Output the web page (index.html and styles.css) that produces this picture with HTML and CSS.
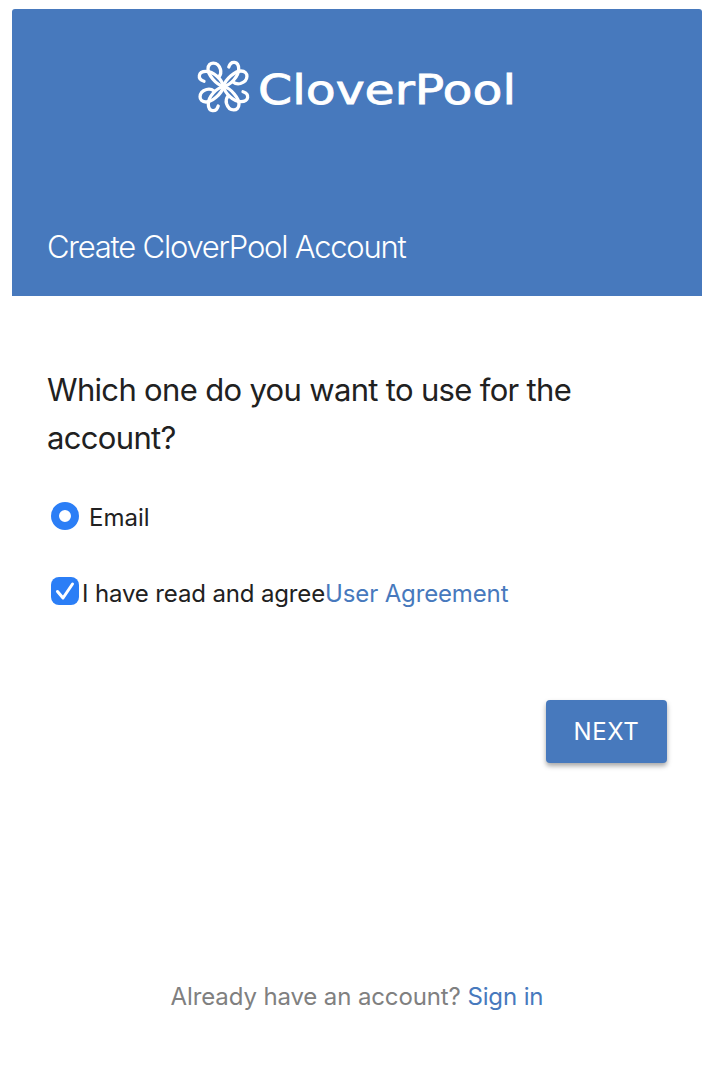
FILE: index.html
```html
<!DOCTYPE html>
<html lang="en">
<head>
  <meta charset="UTF-8" />
  <meta name="viewport" content="width=device-width, initial-scale=1.0" />
  <title>Create CloverPool Account</title>
  <link rel="stylesheet" href="styles.css">
</head>
<body>
  <div class="card">
    <header class="header">
      <svg class="logo" width="320" height="60" viewBox="0 0 320 60" role="img" aria-label="CloverPool">
        <defs>
          <g id="petal">
            <path d="M0 0C-8 -2 -15.500 -12 -15.500 -17.500C-15.500 -25.500 -5.500 -25.500 -3 -17C-2.200 -14 -2.500 -12 -4.500 -9.500" />
            <path d="M0 0C-1.500 -7 -10 -15.200 -17.500 -15.200C-25.500 -15.200 -26.500 -7.500 -19.500 -5.300" />
          </g>
        </defs>
        <g class="logo-mark" transform="translate(26.500 31.500)">
          <use href="#petal" />
          <use href="#petal" transform="rotate(90)" />
          <use href="#petal" transform="rotate(180)" />
          <use href="#petal" transform="rotate(270)" />
        </g>
        <text class="logo-text" x="61" y="49" textLength="258" lengthAdjust="spacingAndGlyphs">CloverPool</text>
      </svg>
      <h1 class="title">Create CloverPool Account</h1>
    </header>

    <form class="form">
      <p class="question">Which one do you want to use for the account?</p>

      <label class="option">
        <input class="radio" type="radio" name="type" checked />
        <span class="email">Email</span>
      </label>

      <div class="option agree">
        <input class="checkbox" type="checkbox" id="agree" checked />
        <svg class="tick" width="28" height="28" viewBox="0 0 28 28"><path d="M6.500 14.500L12 21L21.500 7" /></svg>
        <label class="agree-text" for="agree">I have read and agree</label><a class="link agreement" href="#">User Agreement</a>
      </div>

      <button class="btn" type="button">NEXT</button>
    </form>

    <footer class="footer">Already have an account? <a class="link" href="#">Sign in</a></footer>
  </div>
</body>
</html>
```
FILE: styles.css
```css
* {
  box-sizing: border-box;
}
body {
  margin: 0;
  background: #fff;
  color: #212121;
  font-family: Inter, "Liberation Sans", sans-serif;
}
.card {
  width: 690px;
  margin: 9px 0 0 12px;
}
.header {
  display: flex;
  flex-direction: column;
  height: 287px;
  padding: 46px 36px 0 35px;
  background: #4779bd;
  border-radius: 3px 3px 0 0;
}
.logo {
  align-self: center;
  flex: none;
  overflow: visible;
}
.logo-mark {
  fill: none;
  stroke: #fff;
  stroke-width: 3.3;
  stroke-linecap: round;
}
.logo-text {
  fill: #fff;
  stroke: #fff;
  stroke-width: 0.8;
  font-family: "DejaVu Sans", sans-serif;
  font-size: 41.500px;
}
.title {
  margin: 108px 0 0;
  color: #fff;
  font-size: 31px;
  font-weight: 300;
  line-height: 48px;
  letter-spacing: -1.23px;
  white-space: nowrap;
}
.form {
  display: flex;
  flex-direction: column;
  padding: 70px 35px 0 35px;
}
.question {
  margin: 0;
  font-size: 31px;
  line-height: 48px;
  letter-spacing: -0.67px;
}
.option {
  display: flex;
  align-items: center;
  height: 36px;
  margin-top: 36px;
  padding-left: 4px;
  font-size: 24px;
}
.radio,
.checkbox {
  appearance: none;
  flex: none;
  width: 28px;
  height: 28px;
  margin: 0;
  background: #2b7ef6;
}
.radio {
  border: 8px solid #2b7ef6;
  border-radius: 50%;
  background: #fff;
}
.checkbox {
  border-radius: 8px;
}
.email {
  margin: 3px 0 0 10px;
}
.agree {
  margin-top: 39px;
  letter-spacing: -0.14px;
}
.tick {
  flex: none;
  margin-left: -28px;
  fill: none;
  stroke: #fff;
  stroke-width: 3;
  stroke-linecap: round;
  stroke-linejoin: round;
  pointer-events: none;
}
.agree-text {
  margin: 4px 0 0 3px;
  white-space: nowrap;
}
.agreement {
  margin-top: 4px;
  white-space: nowrap;
}
.link {
  color: #4779bd;
  text-decoration: none;
}
.btn {
  align-self: flex-end;
  width: 121px;
  height: 63px;
  margin-top: 91px;
  padding: 0;
  border: none;
  border-radius: 4px;
  background: #4779bd;
  box-shadow: 0 3px 5px rgba(0, 0, 0, 0.35);
  color: #fff;
  font-family: inherit;
  font-size: 24px;
  letter-spacing: 0.6px;
}
.footer {
  margin-top: 216px;
  color: #808080;
  font-size: 24px;
  line-height: 36px;
  letter-spacing: -0.12px;
  text-align: center;
}
```
